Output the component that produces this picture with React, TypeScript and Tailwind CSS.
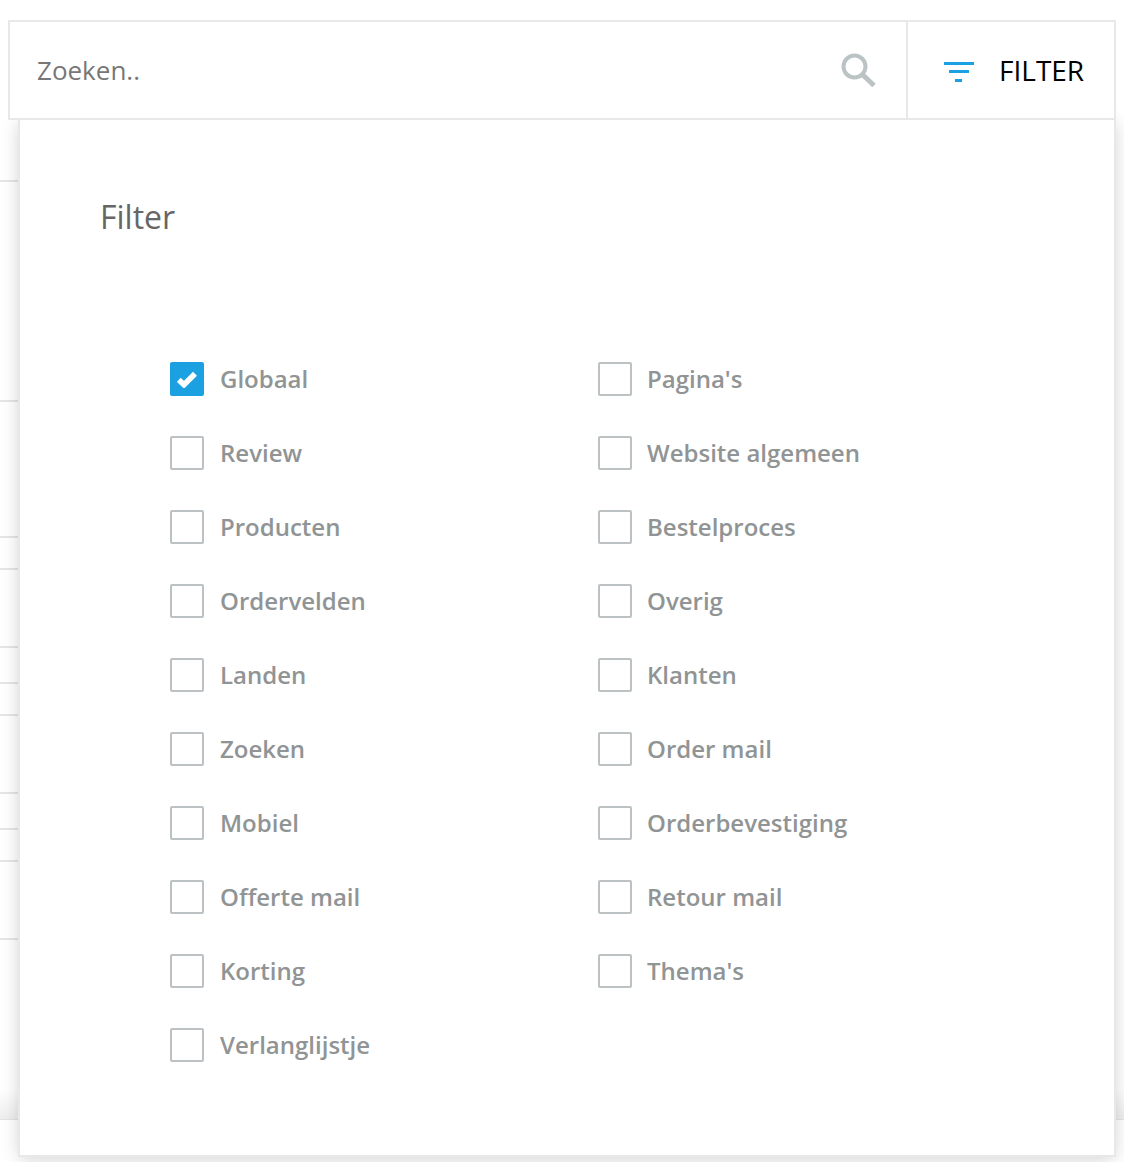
import React from "react";

const leftItems = [
  "Globaal",
  "Review",
  "Producten",
  "Ordervelden",
  "Landen",
  "Zoeken",
  "Mobiel",
  "Offerte mail",
  "Korting",
  "Verlanglijstje",
];

const rightItems = [
  "Pagina's",
  "Website algemeen",
  "Bestelproces",
  "Overig",
  "Klanten",
  "Order mail",
  "Orderbevestiging",
  "Retour mail",
  "Thema's",
];

// heights of the table rows that stick out behind the panel
const rowHeights = [182, 220, 136, 32, 78, 36, 32, 78, 36, 32, 78];

const FilterOption = ({
  label,
  checked,
  gapClass,
}: {
  label: string;
  checked?: boolean;
  gapClass: string;
}) => (
  <label className={`flex items-center h-[34px] ${gapClass}`}>
    {checked ? (
      <span className="w-[34px] h-[34px] rounded-[2px] bg-[#1ba1e2] flex items-center justify-center">
        <svg width="20" height="17" viewBox="0 0 20 17">
          <path d="M1.8 8.8l5.2 5L18 2.8" fill="none" stroke="#fff" strokeWidth="5.5" />
        </svg>
      </span>
    ) : (
      <span className="w-[34px] h-[34px] rounded-[2px] border-2 border-[#bcc1c3] bg-white" />
    )}
    <span className="text-[24px] leading-[32px] font-semibold text-[#909494]">{label}</span>
  </label>
);

export default function App() {
  return (
    <div className="relative h-[1162px] overflow-hidden bg-white font-['Open_Sans',sans-serif]">
      {/* Table behind the panel, only its left edge shows */}
      <div className="absolute left-0 top-0 w-[18px]">
        {rowHeights.map((h, i) => (
          <div key={i} className="border-b-2 border-[#e6e6e6]" style={{ height: h }} />
        ))}
      </div>
      <div className="absolute left-0 right-0 top-[1090px] h-[30px] bg-gradient-to-b from-white to-[#eeeeee] border-b border-[#e3e3e3]" />

      {/* Search bar and open filter panel */}
      <div className="absolute left-[8px] top-[20px] w-[1108px]">
        <div className="relative z-10 flex h-[100px] bg-white border-2 border-[#e8e8e8]">
          <div className="flex-1 flex items-center justify-between pl-[27px] pr-[29px]">
            <span className="text-[26px] text-[#777777]">Zoeken..</span>
            <svg width="38" height="38" viewBox="0 0 38 38" fill="none" stroke="#bcc3c4">
              <circle cx="15.5" cy="15.5" r="11" strokeWidth="4" />
              <path d="M24 24l11 10.5" strokeWidth="5" />
            </svg>
          </div>
          <div className="w-[208px] flex items-center border-l-2 border-[#e8e8e8] pl-[36px] gap-[23px]">
            <svg width="32" height="26" viewBox="0 0 32 26" fill="#1ba1e2">
              <rect x="0" y="5" width="30" height="3" />
              <rect x="5" y="13" width="20" height="3" />
              <rect x="11" y="22" width="7" height="3" />
            </svg>
            <span className="text-[28px] text-black">FILTER</span>
          </div>
        </div>

        <div className="ml-[12px] mr-[2px] h-[1035px] bg-white shadow-[0_0_0_2px_#e8e8e8,0_3px_18px_rgba(0,0,0,0.2)] pt-[75px] pl-[80px]">
          <h2 className="text-[32px] leading-[44px] text-[#666666]">Filter</h2>
          <div className="mt-[123px] ml-[70px] flex">
            <div className="w-[428px] flex flex-col gap-[40px]">
              {leftItems.map((item, i) => (
                <FilterOption key={item} label={item} checked={i === 0} gapClass="gap-[16px]" />
              ))}
            </div>
            <div className="flex flex-col gap-[40px]">
              {rightItems.map((item) => (
                <FilterOption key={item} label={item} gapClass="gap-[15px]" />
              ))}
            </div>
          </div>
        </div>
      </div>
    </div>
  );
}
